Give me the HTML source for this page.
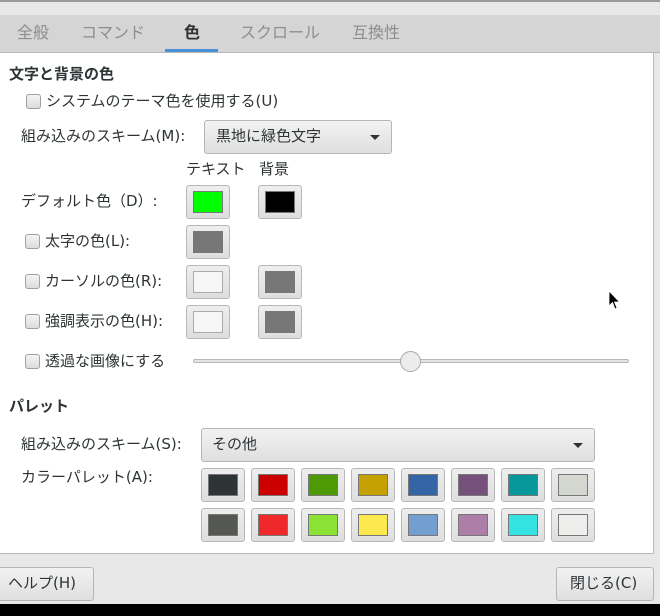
<!DOCTYPE html>
<html><head><meta charset="utf-8"><style>
*{box-sizing:border-box;margin:0;padding:0}
body{width:660px;height:616px;overflow:hidden;background:#e8e8e8;position:relative;font-family:"DejaVu Sans","Noto Sans CJK JP",sans-serif;color:#2e3436;font-size:15px}
.a{position:absolute;white-space:nowrap}
.t{line-height:20px}
.tab{color:#8b8e8f;font-size:16px;line-height:20px}
.cb{position:absolute;width:15px;height:15px;border:1px solid #a0a0a0;border-radius:3px;background:linear-gradient(#f4f4f4,#dcdcdc)}
.btn{position:absolute;border:1px solid #b6b6b3;border-radius:3px;background:linear-gradient(#f2f2f2,#dfdfdf)}
.cbtn{position:absolute;width:44px;height:34px;border:1px solid #b8b8b8;border-radius:3px;background:linear-gradient(#eeeeee,#dedede);padding:5px 6px}
.cbtn div{width:100%;height:100%;border:1px solid #777}
.arr{position:absolute;width:0;height:0;border-left:5px solid transparent;border-right:5px solid transparent;border-top:5px solid #2e3436}
</style></head><body>
<div class="a" style="left:0;top:0;width:660px;height:2px;background:#9a9a9a"></div>
<div class="a" style="left:0;top:15px;width:660px;height:38px;background:#d5d5d5;border-bottom:1px solid #b8b8b8"></div>
<div class="a tab" style="left:17px;top:23px">全般</div>
<div class="a tab" style="left:81px;top:23px">コマンド</div>
<div class="a tab" style="left:184px;top:23px;color:#2e3436;font-weight:bold">色</div>
<div class="a" style="left:165px;top:49px;width:53px;height:3px;background:#4a90d9"></div>
<div class="a tab" style="left:240px;top:23px">スクロール</div>
<div class="a tab" style="left:352px;top:23px">互換性</div>
<div class="a" style="left:0;top:53px;width:654px;height:501px;background:#fff;border-right:1px solid #b8b8b8;border-bottom:1px solid #b8b8b8"></div>

<div class="a t" style="left:9px;top:64px;font-weight:bold;font-size:15px">文字と背景の色</div>
<div class="cb" style="left:26px;top:94px"></div>
<div class="a t" style="left:46px;top:91px">システムのテーマ色を使用する(U)</div>
<div class="a t" style="left:21px;top:126px">組み込みのスキーム(M):</div>
<div class="btn" style="left:204px;top:120px;width:188px;height:34px"></div>
<div class="a t" style="left:216px;top:126px">黒地に緑色文字</div>
<div class="arr" style="left:370px;top:135px"></div>
<div class="a t" style="left:186px;top:159px">テキスト</div>
<div class="a t" style="left:259px;top:159px">背景</div>

<div class="a t" style="left:21px;top:191px">デフォルト色（D）:</div>
<div class="cbtn" style="left:186px;top:185px"><div style="background:#00ff00"></div></div>
<div class="cbtn" style="left:258px;top:185px"><div style="background:#000"></div></div>

<div class="cb" style="left:25px;top:234px"></div>
<div class="a t" style="left:45px;top:231px">太字の色(L):</div>
<div class="cbtn" style="left:186px;top:225px"><div style="background:#777"></div></div>

<div class="cb" style="left:25px;top:274px"></div>
<div class="a t" style="left:45px;top:271px">カーソルの色(R):</div>
<div class="cbtn" style="left:186px;top:265px"><div style="background:#f6f6f6;border-color:#aaa"></div></div>
<div class="cbtn" style="left:258px;top:265px"><div style="background:#777"></div></div>

<div class="cb" style="left:25px;top:314px"></div>
<div class="a t" style="left:45px;top:311px">強調表示の色(H):</div>
<div class="cbtn" style="left:186px;top:305px"><div style="background:#f6f6f6;border-color:#aaa"></div></div>
<div class="cbtn" style="left:258px;top:305px"><div style="background:#777"></div></div>

<div class="cb" style="left:25px;top:354px"></div>
<div class="a t" style="left:45px;top:351px">透過な画像にする</div>
<div class="a" style="left:193px;top:359px;width:436px;height:4px;border:1px solid #b8b8b8;border-radius:2px;background:#e4e4e4"></div>
<div class="a" style="left:400px;top:351px;width:21px;height:21px;border:1px solid #a8a8a8;border-radius:50%;background:#ececec"></div>

<div class="a t" style="left:9px;top:396px;font-weight:bold;font-size:15px">パレット</div>
<div class="a t" style="left:21px;top:434px">組み込みのスキーム(S):</div>
<div class="btn" style="left:201px;top:428px;width:394px;height:34px"></div>
<div class="a t" style="left:212px;top:434px">その他</div>
<div class="arr" style="left:573px;top:443px"></div>
<div class="a t" style="left:21px;top:467px">カラーパレット(A):</div>

<div class="cbtn" style="left:201px;top:468px"><div style="background:#2e3436"></div></div>
<div class="cbtn" style="left:251px;top:468px"><div style="background:#cc0000"></div></div>
<div class="cbtn" style="left:301px;top:468px"><div style="background:#4e9a06"></div></div>
<div class="cbtn" style="left:351px;top:468px"><div style="background:#c4a000"></div></div>
<div class="cbtn" style="left:401px;top:468px"><div style="background:#3465a4"></div></div>
<div class="cbtn" style="left:451px;top:468px"><div style="background:#75507b"></div></div>
<div class="cbtn" style="left:501px;top:468px"><div style="background:#06989a"></div></div>
<div class="cbtn" style="left:551px;top:468px"><div style="background:#d3d7cf"></div></div>
<div class="cbtn" style="left:201px;top:508px"><div style="background:#555753"></div></div>
<div class="cbtn" style="left:251px;top:508px"><div style="background:#ef2929"></div></div>
<div class="cbtn" style="left:301px;top:508px"><div style="background:#8ae234"></div></div>
<div class="cbtn" style="left:351px;top:508px"><div style="background:#fce94f"></div></div>
<div class="cbtn" style="left:401px;top:508px"><div style="background:#729fcf"></div></div>
<div class="cbtn" style="left:451px;top:508px"><div style="background:#ad7fa8"></div></div>
<div class="cbtn" style="left:501px;top:508px"><div style="background:#34e2e2"></div></div>
<div class="cbtn" style="left:551px;top:508px"><div style="background:#eeeeec"></div></div>

<div class="btn" style="left:-3px;top:567px;width:97px;height:34px"></div>
<div class="a t" style="left:8px;top:573px">ヘルプ(H)</div>
<div class="btn" style="left:556px;top:567px;width:98px;height:34px"></div>
<div class="a t" style="left:570px;top:573px">閉じる(C)</div>
<div class="a" style="left:0;top:604px;width:660px;height:12px;background:#000"></div>

<svg class="a" style="left:608px;top:290px" width="14" height="22" viewBox="0 0 14 22"><path d="M1 1 L1 16 L4.5 12.5 L7 19 L9 18 L6.5 12 L11.5 12 Z" fill="#000" stroke="#fff" stroke-width="0.8"/></svg>
</body></html>
